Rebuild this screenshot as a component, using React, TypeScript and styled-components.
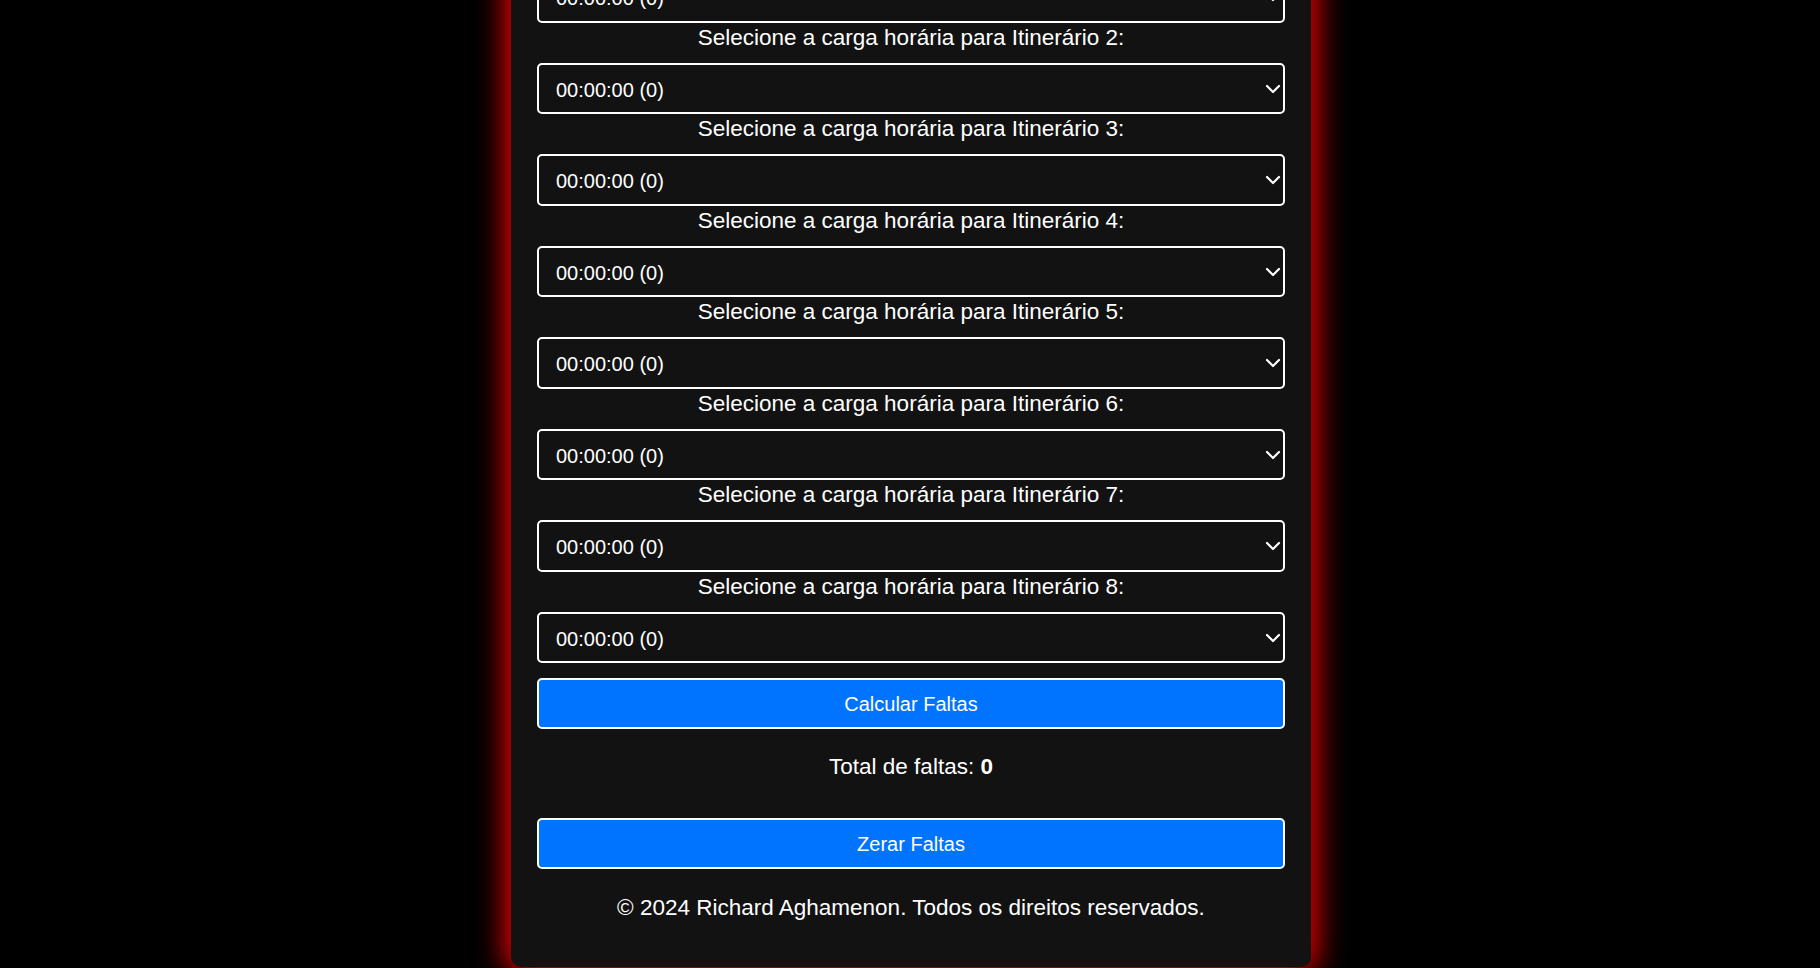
import React from 'react';
import styled, { createGlobalStyle } from 'styled-components';
import { ChevronDown } from 'lucide-react';

const GlobalStyle = createGlobalStyle`
  html, body {
    margin: 0;
    padding: 0;
    background: #000;
  }
  body {
    font-family: "Liberation Sans", Arial, sans-serif;
    color: #fff;
  }
`;

const Page = styled.main`
  height: 100vh;
  box-sizing: border-box;
  padding: 0 0 1px 2px;
  display: flex;
  flex-direction: column;
  align-items: center;
  justify-content: flex-end;
  overflow: hidden;
`;

const Card = styled.section`
  flex-shrink: 0;
  width: 800px;
  box-sizing: border-box;
  padding: 24px 26px 45.8px;
  background: #121212;
  border-radius: 10px;
  box-shadow: 0 0 30px 5px #f00;
  display: flex;
  flex-direction: column;
  text-align: center;
`;

const Title = styled.h1`
  margin: 0 0 20px;
  font-size: 32px;
  font-weight: bold;
`;

const Field = styled.div`
  display: flex;
  flex-direction: column;
`;

const Label = styled.label`
  display: block;
  font-size: 22.5px;
  line-height: normal;
  margin: 2px 0 12px;
`;

const SelectWrap = styled.div`
  position: relative;
  height: 51.5px;
`;

const Select = styled.select`
  appearance: none;
  -webkit-appearance: none;
  width: 100%;
  height: 100%;
  box-sizing: border-box;
  margin: 0;
  padding: 2px 40px 0 17px;
  background: #121212;
  color: #fff;
  border: 2px solid #fff;
  border-radius: 5px;
  font-family: "Liberation Sans", Arial, sans-serif;
  font-size: 20px;
  outline: none;
`;

const Chevron = styled(ChevronDown)`
  position: absolute;
  right: 0;
  top: 50%;
  transform: translateY(-50%);
  color: #fff;
  pointer-events: none;
`;

const Button = styled.button<{ $gap: number }>`
  width: 100%;
  height: 51px;
  margin: ${(p) => p.$gap}px 0 0;
  padding: 1px 0 0;
  box-sizing: border-box;
  background: #0073ff;
  color: #fff;
  border: 2px solid #fff;
  border-radius: 5px;
  font-family: "Liberation Sans", Arial, sans-serif;
  font-size: 20px;
  cursor: pointer;
`;

const Total = styled.p`
  margin: 25.3px 0 37.8px;
  font-size: 22.5px;
  line-height: normal;
`;

const Footer = styled.footer`
  margin-top: 26px;
  font-size: 22.5px;
  line-height: normal;
`;

const itinerarios = [1, 2, 3, 4, 5, 6, 7, 8];

export default function App() {
  return (
    <>
      <GlobalStyle />
      <Page>
        <Card>
          <Title>Calculadora de Faltas</Title>
          {itinerarios.map((n) => (
            <Field key={n}>
              <Label htmlFor={`it-${n}`}>Selecione a carga horária para Itinerário {n}:</Label>
              <SelectWrap>
                <Select id={`it-${n}`} defaultValue="0">
                  <option value="0">00:00:00 (0)</option>
                  <option value="1">00:50:00 (1)</option>
                  <option value="2">01:40:00 (2)</option>
                </Select>
                <Chevron size={24} strokeWidth={2.2} />
              </SelectWrap>
            </Field>
          ))}
          <Button $gap={14.7}>Calcular Faltas</Button>
          <Total>
            Total de faltas: <strong>0</strong>
          </Total>
          <Button $gap={0}>Zerar Faltas</Button>
          <Footer>© 2024 Richard Aghamenon. Todos os direitos reservados.</Footer>
        </Card>
      </Page>
    </>
  );
}
